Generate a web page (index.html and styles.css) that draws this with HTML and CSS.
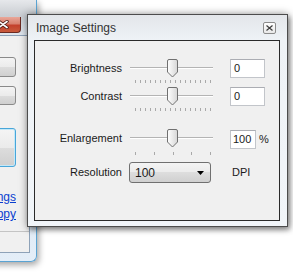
FILE: index.html
```html
<!DOCTYPE html>
<html lang="en">
<head>
    <meta charset="UTF-8">
    <title>Image Settings</title>
    <link rel="stylesheet" href="styles.css">
</head>
<body>
    <!-- Main window behind the dialog -->
    <div class="back-win">
        <div class="back-title">
            <span class="red-close">
                <svg width="12" height="9" viewBox="0 0 12 9">
                    <path d="M2 1.5 L10 7.5 M10 1.5 L2 7.5" stroke="#4a1a14" stroke-width="3.4" stroke-linecap="round"/>
                    <path d="M2 1.5 L10 7.5 M10 1.5 L2 7.5" stroke="#ffffff" stroke-width="1.7" stroke-linecap="round"/>
                </svg>
            </span>
        </div>
        <div class="back-client">
            <button class="back-btn b1"></button>
            <button class="back-btn b2"></button>
            <button class="back-btn b3"></button>
            <a class="back-link first">Save settings</a>
            <a class="back-link">Save to floppy</a>
            <div class="back-status"></div>
        </div>
    </div>

    <!-- Image settings dialog -->
    <div class="dlg">
        <div class="dlg-title">
            <span class="dlg-caption">Image Settings</span>
            <span class="dlg-close">
                <svg width="7" height="6" viewBox="0 0 7 6">
                    <path d="M0.5 0.5 L6.5 5.5 M6.5 0.5 L0.5 5.5" stroke="#3c3c3c" stroke-width="1.2"/>
                </svg>
            </span>
        </div>
        <div class="dlg-client">
            <div class="row">
                <span class="label">Brightness</span>
                <div class="slider">
                    <div class="track"></div>
                    <div class="ticks fine"></div>
                    <svg class="thumb" width="11" height="19" viewBox="0 0 11 19">
                        <defs>
                            <linearGradient id="tg1" x1="0" y1="0" x2="1" y2="0">
                                <stop offset="0" stop-color="#ffffff"/>
                                <stop offset="1" stop-color="#d6d6d6"/>
                            </linearGradient>
                        </defs>
                        <path d="M2 0.5 H9 Q10.5 0.5 10.5 2 V13 L5.5 18 L0.5 13 V2 Q0.5 0.5 2 0.5 Z" fill="url(#tg1)" stroke="#707070"/>
                    </svg>
                </div>
                <div class="field"><span class="input wide">0</span></div>
            </div>
            <div class="row group-end">
                <span class="label">Contrast</span>
                <div class="slider">
                    <div class="track"></div>
                    <div class="ticks fine"></div>
                    <svg class="thumb" width="11" height="19" viewBox="0 0 11 19">
                        <path d="M2 0.5 H9 Q10.5 0.5 10.5 2 V13 L5.5 18 L0.5 13 V2 Q0.5 0.5 2 0.5 Z" fill="url(#tg1)" stroke="#707070"/>
                    </svg>
                </div>
                <div class="field"><span class="input wide">0</span></div>
            </div>
            <div class="row enl">
                <span class="label">Enlargement</span>
                <div class="slider">
                    <div class="track"></div>
                    <div class="ticks coarse"></div>
                    <svg class="thumb" width="11" height="19" viewBox="0 0 11 19">
                        <path d="M2 0.5 H9 Q10.5 0.5 10.5 2 V13 L5.5 18 L0.5 13 V2 Q0.5 0.5 2 0.5 Z" fill="url(#tg1)" stroke="#707070"/>
                    </svg>
                </div>
                <div class="field"><span class="input short">100</span><span class="unit">%</span></div>
            </div>
            <div class="row last">
                <span class="label">Resolution</span>
                <div class="combo">
                    <span>100</span>
                    <svg width="7" height="4" viewBox="0 0 7 4"><path d="M0 0 H7 L3.5 4 Z" fill="#000"/></svg>
                </div>
                <div class="field"><span class="unit dpi">DPI</span></div>
            </div>
        </div>
    </div>
</body>
</html>
```

FILE: styles.css
```css
* {
    margin: 0;
    padding: 0;
    box-sizing: border-box;
    font-family: 'Liberation Sans', Arial, sans-serif;
}

body {
    width: 293px;
    height: 277px;
    overflow: hidden;
    background: #ffffff;
    position: relative;
}

/* Window in the background, mostly hidden */
.back-win {
    position: absolute;
    left: -100px;
    top: 0;
    width: 137px;
    height: 262px;
    display: flex;
    flex-direction: column;
    padding: 0 6px 8px 7px;
    background: linear-gradient(#e6e8eb, #c9cdd2 16px, #dfe6ee 34px, #dbe6f2 60%, #e4eef8);
    border: 1px solid #5aa3d2;
    border-top: none;
    border-radius: 0 0 6px 6px;
    box-shadow: 2px 3px 6px rgba(0, 0, 0, 0.35);
}

.back-title {
    height: 35px;
    flex-shrink: 0;
    position: relative;
}

.red-close {
    position: absolute;
    right: 9px;
    top: 17px;
    width: 43px;
    height: 16px;
    display: flex;
    align-items: center;
    justify-content: flex-end;
    padding-right: 11px;
    border: 1px solid #6b2a22;
    border-top: none;
    border-radius: 0 0 4px 4px;
    background: linear-gradient(#e9a799, #d8806f 45%, #c4402c 55%, #c85a3c);
}

.back-client {
    flex: 1;
    display: flex;
    flex-direction: column;
    align-items: flex-end;
    padding: 21px 13px 0 0;
    background: #f0f0f0;
    border: 1px solid #8ea2b8;
}

.back-btn {
    width: 100px;
    border: 1px solid #8a8a8a;
    border-radius: 3px;
    background: linear-gradient(#f4f4f4, #ebebeb 50%, #dddddd 50%, #cfcfcf);
    flex-shrink: 0;
}

.b1 {
    height: 20px;
    margin-bottom: 9px;
}

.b2 {
    height: 19px;
    margin-bottom: 23px;
}

.b3 {
    height: 39px;
    border-color: #48a6d9;
    box-shadow: inset 0 0 0 1px #c4e8f8;
}

.back-link {
    font-size: 12px;
    line-height: 17px;
    color: #0a3fcf;
    text-decoration: underline;
    white-space: nowrap;
}

.back-link.first {
    margin-top: 22px;
}

.back-status {
    margin-top: auto;
    align-self: stretch;
    margin-right: -13px;
    height: 21px;
    border-top: 1px solid #c4c4c4;
}

/* Dialog */
.dlg {
    position: absolute;
    left: 27px;
    top: 14px;
    width: 261px;
    height: 213px;
    display: flex;
    flex-direction: column;
    padding: 0 7px 5px 6px;
    background: linear-gradient(#e3e6ea, #eef2f6 25px, #f1f5f9);
    border: 1px solid #4c4c4c;
    box-shadow: 0 0 8px rgba(0, 0, 0, 0.4), 2px 3px 5px rgba(0, 0, 0, 0.35);
}

.dlg-title {
    height: 25px;
    flex-shrink: 0;
    display: flex;
    align-items: center;
    justify-content: space-between;
    padding: 0 4px 0 2px;
}

.dlg-caption {
    font-size: 12px;
    color: #333333;
}

.dlg-close {
    width: 13px;
    height: 12px;
    display: flex;
    align-items: center;
    justify-content: center;
    border: 1px solid #8c8c8c;
    border-radius: 2px;
    background: linear-gradient(#ffffff, #e8e8e8);
}

.dlg-client {
    flex: 1;
    padding-top: 18px;
    background: #f0f0f0;
    border: 1px solid #2a2a2a;
    font-size: 11px;
    color: #1a1a1a;
}

/* Rows of controls */
.row {
    display: grid;
    grid-template-columns: 87px 87px 1fr;
    column-gap: 7px;
    height: 19px;
    margin-bottom: 9px;
}

.row.group-end {
    margin-bottom: 23px;
}

.row.enl {
    height: 20px;
    margin-bottom: 13px;
}

.row.last {
    height: 21px;
}

.label {
    text-align: right;
    line-height: 19px;
    white-space: nowrap;
}

.row.last .label {
    line-height: 21px;
}

.slider {
    position: relative;
}

.track {
    position: absolute;
    left: 1px;
    top: 8px;
    width: 83px;
    height: 2px;
    border-top: 1px solid #b4b4b4;
    border-bottom: 1px solid #ffffff;
}

.thumb {
    position: absolute;
    left: 38px;
    top: 0;
}

.ticks {
    position: absolute;
    left: 6px;
    top: 21px;
    width: 77px;
    height: 3px;
}

.ticks.fine {
    background: repeating-linear-gradient(to right, #a9a9a9 0 1px, transparent 1px 5px);
}

.ticks.coarse {
    top: 23px;
    background: repeating-linear-gradient(to right, #a9a9a9 0 1px, transparent 1px 18.75px);
}

.field {
    display: flex;
    align-items: center;
    padding-left: 7px;
}

.input {
    height: 19px;
    line-height: 17px;
    padding-left: 3px;
    background: #ffffff;
    border: 1px solid #c2c5ca;
    border-top-color: #abadb3;
}

.input.wide {
    width: 35px;
}

.input.short {
    width: 26px;
    padding-left: 2px;
}

.unit {
    padding-left: 3px;
}

.unit.dpi {
    padding-left: 2px;
    line-height: 21px;
}

.combo {
    width: 82px;
    height: 21px;
    display: flex;
    align-items: center;
    justify-content: space-between;
    padding: 0 6px 0 5px;
    font-size: 12px;
    border: 1px solid #707070;
    border-radius: 3px;
    background: linear-gradient(#f4f4f4, #ebebeb 50%, #dddddd 50%, #d0d0d0);
}
```
